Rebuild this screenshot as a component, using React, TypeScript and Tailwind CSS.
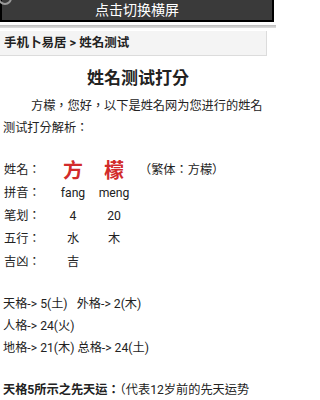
const FONT = { fontFamily: "Roboto, 'Noto Sans CJK TC', sans-serif" }

const rows = [
  { label: '拼音：', a: 'fang', b: 'meng' },
  { label: '笔划：', a: '4', b: '20' },
  { label: '五行：', a: '水', b: '木' },
  { label: '吉凶：', a: '吉', b: '' },
]

export default function App() {
  return (
    <div className="relative h-[400px] w-[276px] overflow-hidden bg-white text-[#222]" style={FONT}>
      {/* top bar */}
      <div className="relative flex h-[22px] w-[274px] items-center justify-center border-2 border-t-0 border-black bg-[#3a3a3a]">
        <span className="absolute -left-[4px] -top-[9px] h-[14px] w-[14px] rounded-full border-2 border-[#9a9a9a]" />
        <span className="text-[14px] leading-none text-white">点击切换横屏</span>
      </div>
      <div className="mt-[3px] h-[3px] w-full bg-gradient-to-b from-[#bdbdbd] to-[#e0e0e0]" />

      {/* breadcrumb */}
      <div className="mt-[3px] flex h-[25px] w-[267px] items-center border-b border-r border-[#dcdcdc] bg-[#f4f4f4] pl-[4px] text-[12.5px] font-bold">
        手机卜易居 &gt; 姓名测试
      </div>

      {/* title */}
      <h1 className="mt-[10px] text-center text-[17px] font-bold leading-[24px]">姓名测试打分</h1>

      <div className="px-[3px]">
        <p className="mt-[5px] text-[12.2px] leading-[22px]">
          <span className="pl-[28px]">方檬，您好，以下是姓名网为您进行的姓名</span>
          <br />
          测试打分解析：
        </p>

        {/* name table */}
        <div className="mt-[20px] text-[12.2px]">
          <div className="flex h-[23px] items-center">
            <span className="w-[50px] pl-[1px]">姓名：</span>
            <span className="w-[40px] text-center text-[20px] font-bold text-[#d22b2b]">方</span>
            <span className="w-[42px] text-center text-[20px] font-bold text-[#d22b2b]">檬</span>
            <span className="pl-[4px]">（繁体：方檬）</span>
          </div>
          {rows.map((r) => (
            <div key={r.label} className="flex h-[23px] items-center">
              <span className="w-[50px] pl-[1px]">{r.label}</span>
              <span className="w-[40px] text-center">{r.a}</span>
              <span className="w-[42px] text-center">{r.b}</span>
            </div>
          ))}
        </div>

        <div className="mt-[19px] text-[12.2px] leading-[22px]">
          <div>
            天格-&gt; 5(土)&nbsp;&nbsp; 外格-&gt; 2(木)
          </div>
          <div>人格-&gt; 24(火)</div>
          <div>地格-&gt; 21(木) 总格-&gt; 24(土)</div>
        </div>

        <p className="mt-[20px] text-[12.2px] leading-[22px]">
          <b>天格5所示之先天运：</b>（代表12岁前的先天运势
        </p>
      </div>
    </div>
  )
}
